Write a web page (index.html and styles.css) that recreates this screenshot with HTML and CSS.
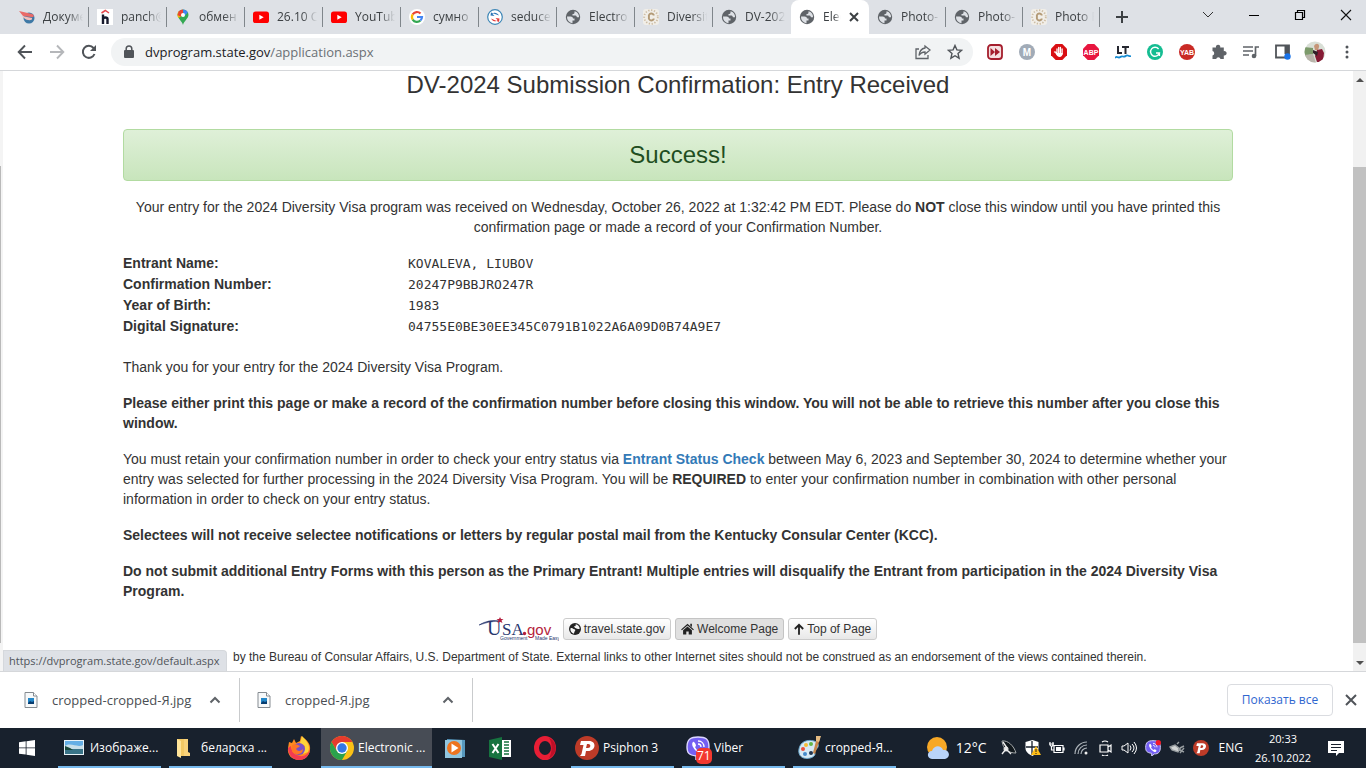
FILE: index.html
```html
<!DOCTYPE html>
<html lang="en">
<head>
<meta charset="utf-8">
<title>Electronic Diversity Visa Program</title>
<link rel="stylesheet" href="styles.css">
</head>
<body>
<svg class="defs" aria-hidden="true">
  <symbol id="globe" viewBox="0 0 16 16"><circle cx="8" cy="8" r="7.2" fill="#5f6368"/><path d="M2 7.500H5.500C7 7.500 8 8.300 8 9.500h1.500v2H7.500v2.700A6.200 6.200 0 0 1 2 7.500zM9.500 2.200V3.500C9.500 4.500 8.700 5 7.500 5v1.500h3c1 0 1 1 1.500 1.800h2.100A6.200 6.200 0 0 0 9.500 2.200z" fill="#dee1e6"/></symbol>
  <symbol id="youtube" viewBox="0 0 16 16"><rect y="2.500" width="16" height="11.500" rx="2.600" fill="#f00"/><path d="M6.300 5.700v5L10.700 8.200z" fill="#fff"/></symbol>
  <symbol id="sun-c" viewBox="0 0 16 16"><rect width="16" height="16" rx="3" fill="#f1eee8"/><circle cx="8" cy="8" r="6.800" fill="none" stroke="#cdbda4" stroke-width="1.800" stroke-dasharray="1.300 1.600"/><path d="M10.600 6.400V5.700A2.600 2.400 0 0 0 5.900 6.200v3.600a2.600 2.400 0 0 0 4.700.5v-.7" fill="none" stroke="#b39a76" stroke-width="1.900"/></symbol>
  <symbol id="picture-file" viewBox="0 0 14 18"><path d="M1 1.500h8.500L13 5v11.500H1z" fill="#f7f9fa" stroke="#858b91"/><path d="M9.500 1.500V5H13" fill="#fff" stroke="#858b91"/><path d="M4 7h6v6H4z" fill="#2487c8"/><path d="M4 12l2-2 2 1 2-1v3H4z" fill="#083d70"/></symbol>
  <symbol id="chev-up" viewBox="0 0 12 12"><path d="M1.500 8.500L6 4l4.500 4.500" fill="none" stroke="#5f6368" stroke-width="2"/></symbol>
  <symbol id="psiphon" viewBox="0 0 24 24"><circle cx="12" cy="12" r="12" fill="#bd3b28"/><path d="M6 5h8c8 0 7 10-1 10h-2l-1 5H5l1.500-2 2-9H5zM12 8l-1 4h2c3 0 3-4 .5-4z" fill="#fff" fill-rule="evenodd"/></symbol>
  <symbol id="viber" viewBox="0 0 24 24"><path d="M12 1c8 0 11 2 11 10 0 7-3 10-9 10l-4 3v-4C3 19 1 17 1 11 1 3 5 1 12 1z" fill="#735ff2" stroke="#dcd7ff" stroke-width="1.400"/><path d="M7 6c-2 2 0 6 3 9 3 3 6 4 7 2 1-1-1-3-3-3l-1 1c-2-1-3-2-4-4l1-1c0-2-2-5-3-4z" fill="#fff"/><path d="M12 5c4 0 6 3 6 6M12 8c2 0 3 1 3 3" fill="none" stroke="#fff" stroke-width="1.300"/></symbol>
</svg>

<header class="browser-head">
  <div class="tabstrip">
    <nav class="tabs" aria-label="Tabs">
      <button class="tab"><svg class="fav" viewBox="0 0 16 16"><circle cx="10" cy="9" r="5.500" fill="#3e79a6"/><path d="M0 2l13 3c3 1 2 4-1 3L4 7z" fill="#e96a68"/><path d="M3 7l10 2c1 3-5 3-8 0z" fill="#f3bebb"/></svg><span>Докумен</span></button>
      <button class="tab"><svg class="fav" viewBox="0 0 16 16"><path fill="#fff" d="M0 0h16v16H0z"/><path d="M4.500 4l3.800-2.500L12 4" fill="none" stroke="#e5484d" stroke-width="1.500"/><path d="M6 5.500V15M6 10c0-2 4.500-2 4.500 0v5" fill="none" stroke="#17192d" stroke-width="2.400"/></svg><span>panch@</span></button>
      <button class="tab"><svg class="fav" viewBox="0 0 16 16"><path d="M8 16C7 12 3 10 2.500 6A5.500 5.500 0 0 1 13.500 6C13 10 9 12 8 16z" fill="#34a853"/><path d="M3.500 9A5.500 5.500 0 0 1 3.700 2.600L8 6z" fill="#fbbc04"/><path d="M3.700 2.600A5.500 5.500 0 0 1 8 .5v4L5.500 7.800 2.600 6z" fill="#ea4335"/><path d="M8 .5a5.500 5.500 0 0 1 4.800 3L8.500 8z" fill="#4285f4"/><circle cx="8" cy="6" r="2" fill="#fff"/></svg><span>обмен</span></button>
      <button class="tab"><svg class="fav"><use href="#youtube"/></svg><span>26.10 С</span></button>
      <button class="tab"><svg class="fav"><use href="#youtube"/></svg><span>YouTub</span></button>
      <button class="tab"><svg class="fav" viewBox="0 0 16 16"><circle cx="8" cy="8" r="8" fill="#fff"/><g fill="none" stroke-width="2.200"><path d="M11.500 4.500A5 5 0 0 0 3.700 5.400" stroke="#ea4335"/><path d="M3.700 5.400a5 5 0 0 0 0 5.200" stroke="#fbbc05"/><path d="M3.700 10.600a5 5 0 0 0 7.700.9" stroke="#34a853"/><path d="M11.400 11.500A5 5 0 0 0 13 8H8" stroke="#4285f4"/></g></svg><span>сумно</span></button>
      <button class="tab"><svg class="fav" viewBox="0 0 16 16"><circle cx="8" cy="8" r="7.300" fill="#fff" stroke="#3d86b6" stroke-width="1.200"/><path d="M12 6.500C10 3 6.500 3 5.500 5l2 2-4-.5L4 3.500" fill="#2874b5"/><path d="M4 9.500c2 3.500 5.500 3.500 6.500 1.500L8.500 9l4 .5-.5 3.500" fill="#e33d3b"/></svg><span>seduce</span></button>
      <button class="tab"><svg class="fav"><use href="#globe"/></svg><span>Electro</span></button>
      <button class="tab"><svg class="fav"><use href="#sun-c"/></svg><span>Diversit</span></button>
      <button class="tab before-active"><svg class="fav"><use href="#globe"/></svg><span>DV-202</span></button>
      <div class="tab active"><svg class="fav"><use href="#globe"/></svg><span>Elec</span><button class="tab-close" aria-label="Close tab"><svg width="10" height="10" viewBox="0 0 10 10"><path d="M1 1l8 8M9 1L1 9" stroke="#3c4043" stroke-width="2"/></svg></button></div>
      <button class="tab"><svg class="fav"><use href="#globe"/></svg><span>Photo-</span></button>
      <button class="tab"><svg class="fav"><use href="#globe"/></svg><span>Photo-</span></button>
      <button class="tab"><svg class="fav"><use href="#sun-c"/></svg><span>Photo R</span></button>
    </nav>
    <button class="newtab" aria-label="New tab"><svg width="12" height="12" viewBox="0 0 12 12"><path d="M6 0v12M0 6h12" stroke="#3c4043" stroke-width="2"/></svg></button>
    <div class="win-controls">
      <button aria-label="Search tabs"><svg width="12" height="12" viewBox="0 0 12 12"><path d="M1 3l5 5 5-5" fill="none" stroke="#333"/></svg></button>
      <button aria-label="Minimize"><svg width="12" height="12" viewBox="0 0 12 12"><path d="M1 6.500h10" stroke="#000"/></svg></button>
      <button aria-label="Restore"><svg width="12" height="12" viewBox="0 0 12 12"><path d="M1.500 3.500h7v7h-7zM3.500 3V1.500h7v7H9" fill="none" stroke="#000" stroke-width="1.200"/></svg></button>
      <button aria-label="Close"><svg width="12" height="12" viewBox="0 0 12 12"><path d="M1 1l10 10M11 1L1 11" stroke="#111" stroke-width="1.100"/></svg></button>
    </div>
  </div>
  <div class="toolbar">
    <button class="tool" aria-label="Back"><svg width="16" height="16" viewBox="0 0 16 16"><path d="M15 8H2M8 1.500L1.700 8 8 14.500" fill="none" stroke="#505459" stroke-width="1.900"/></svg></button>
    <button class="tool" aria-label="Forward"><svg width="16" height="16" viewBox="0 0 16 16"><path d="M1 8h13M8 1.500L14.300 8 8 14.500" fill="none" stroke="#b5b7ba" stroke-width="1.900"/></svg></button>
    <button class="tool" aria-label="Reload"><svg width="16" height="16" viewBox="0 0 16 16"><path d="M13.500 10A6 6 0 1 1 12.500 4l1.500 1.500" fill="none" stroke="#505459" stroke-width="2"/><path d="M15 1v6H9z" fill="#505459"/></svg></button>
    <div class="omnibox">
      <svg width="10" height="14" viewBox="0 0 10 14"><path d="M2.200 6V3.800a2.800 2.800 0 0 1 5.600 0V6" fill="none" stroke="#505459" stroke-width="1.500"/><rect y="5" width="10" height="8" rx="1" fill="#505459"/></svg>
      <a class="url" href="#top">dvprogram.state.gov<span>/application.aspx</span></a>
      <button class="tool" aria-label="Share"><svg width="16" height="16" viewBox="0 0 16 16"><path d="M4 5H1v9.500h12V11" fill="none" stroke="#5f6368" stroke-width="1.300"/><path d="M10 2l5 4-5 4.200V8C7 8 5.500 9 4 11.500 4.500 7 7 4.500 10 4z" fill="none" stroke="#5f6368" stroke-width="1.300"/></svg></button>
      <button class="tool" aria-label="Bookmark"><svg width="16" height="16" viewBox="0 0 16 16"><path d="M8 1.500l1.900 4.400 4.800.4L11 9.500l1.100 4.700L8 11.700l-4.100 2.500L5 9.500 1.300 6.300l4.800-.4z" fill="none" stroke="#505459" stroke-width="1.400"/></svg></button>
    </div>
    <div class="extensions">
      <button class="tool" aria-label="Video speed"><svg width="16" height="16" viewBox="0 0 16 16"><rect x="1" y="1" width="14" height="14" rx="3" fill="#f5dfe0" stroke="#a51e2d" stroke-width="1.800"/><path d="M3.500 4l4.500 4-4.500 4zM8 4l5 4-5 4z" fill="#a51e2d"/></svg></button>
      <button class="tool" aria-label="M extension"><svg width="16" height="16"><circle cx="8" cy="8" r="8" fill="#a1abb7"/><text x="8" y="12" class="badge-text t10">M</text></svg></button>
      <button class="tool" aria-label="AdBlock"><svg width="16" height="16" viewBox="0 0 16 16"><path d="M4.700 0h6.600L16 4.700v6.600L11.300 16H4.700L0 11.300V4.700z" fill="#d90f13"/><path d="M3.500 8c1-.5 1.500.5 2 1.500M6 10V5M7.700 9V3.500M9.400 9V3.500M11.100 10V5" fill="none" stroke="#fff" stroke-width="1.300" stroke-linecap="round"/><path d="M4.500 9h7.200c0 5-5.500 5.500-7.200 0z" fill="#fff"/></svg></button>
      <button class="tool" aria-label="Adblock Plus"><svg width="16" height="16"><path d="M4.700 0h6.600L16 4.700v6.600L11.300 16H4.700L0 11.300V4.700z" fill="#e8163f"/><text x="8" y="11" class="badge-text t7">ABP</text></svg></button>
      <button class="tool" aria-label="LanguageTool"><svg width="16" height="16" viewBox="0 0 16 16"><path d="M3 2v7h4M7 3h7M10.500 3v7" fill="none" stroke="#252730" stroke-width="2"/><path d="M0 14c2-3 3 1 5.300-1s3 1 5.300-1 3 1 5.400 0" fill="none" stroke="#168bd2" stroke-width="1.800"/></svg></button>
      <button class="tool" aria-label="Grammarly"><svg width="16" height="16" viewBox="0 0 16 16"><circle cx="8" cy="8" r="8" fill="#15bd92"/><path d="M11.600 5A4.500 4.500 0 1 0 12.400 9H9M12.400 8.500V12" fill="none" stroke="#fff" stroke-width="1.400"/></svg></button>
      <button class="tool" aria-label="YAB"><svg width="16" height="16"><circle cx="8" cy="8" r="8" fill="#c92a25"/><text x="8" y="11" class="badge-text t7">YAB</text></svg></button>
      <button class="tool" aria-label="Extensions"><svg width="16" height="16" viewBox="0 0 16 16"><path d="M1.500 3.500H5a2.200 2.200 0 1 1 4.200 0h3.600v3.700a2.200 2.200 0 1 1 0 4.200V15H9.500a2.200 2.200 0 0 0-4.300 0H1.500v-3.600a2.200 2.200 0 0 0 0-4.300z" fill="#5f6368"/></svg></button>
      <button class="tool" aria-label="Media"><svg width="16" height="16" viewBox="0 0 16 16"><path d="M0 3h10M0 7h10M0 11h6M12.500 12V3H16" fill="none" stroke="#5f6368" stroke-width="1.700"/><circle cx="11" cy="12" r="2.300" fill="#5f6368"/></svg></button>
      <button class="tool" aria-label="Side panel"><svg width="16" height="16" viewBox="0 0 16 16"><path d="M1 1.500h13v12H1z" fill="#fff" stroke="#505459" stroke-width="1.800"/><path d="M9.500 2H14v8H9.500z" fill="#505459"/><circle cx="12.500" cy="12.500" r="3.200" fill="#1a73e8"/></svg></button>
      <button class="tool" aria-label="Profile"><svg width="22" height="22" viewBox="0 0 22 22"><defs><clipPath id="face"><circle cx="11" cy="11" r="10.500"/></clipPath></defs><g clip-path="url(#face)"><path fill="#d9dfd6" d="M0 0h22v22H0z"/><path d="M0 6l9 1v6l-9 2z" fill="#7c9a6b"/><path d="M0 14l9-1 3 9H0z" fill="#b9b5ab"/><path d="M10 5c2-4 6-2 5 1l-1 3h-3z" fill="#c69578"/><path d="M13 9l5-1 2 4-1 9h-6l-2-6z" fill="#861b35"/><path d="M9 9l5 2-1 4-4-3z" fill="#302028"/></g></svg></button>
      <button class="tool" aria-label="Menu"><svg width="16" height="16" viewBox="0 0 16 16" fill="#505459"><circle cx="8" cy="3" r="1.500"/><circle cx="8" cy="8" r="1.500"/><circle cx="8" cy="13" r="1.500"/></svg></button>
    </div>
  </div>
</header>

<div class="viewport" id="top">
  <div class="edge"><i></i></div>
  <main class="page">
    <h1>DV-2024 Submission Confirmation: Entry Received</h1>
    <div class="alert">Success!</div>
    <p class="center">Your entry for the 2024 Diversity Visa program was received on Wednesday, October 26, 2022 at 1:32:42 PM EDT. Please do <b>NOT</b> close this window until you have printed this confirmation page or made a record of your Confirmation Number.</p>
    <dl class="record">
      <dt>Entrant Name:</dt><dd>KOVALEVA, LIUBOV</dd>
      <dt>Confirmation Number:</dt><dd>20247P9BBJRO247R</dd>
      <dt>Year of Birth:</dt><dd>1983</dd>
      <dt>Digital Signature:</dt><dd>04755E0BE30EE345C0791B1022A6A09D0B74A9E7</dd>
    </dl>
    <p>Thank you for your entry for the 2024 Diversity Visa Program.</p>
    <p><b>Please either print this page or make a record of the confirmation number before closing this window. You will not be able to retrieve this number after you close this window.</b></p>
    <p>You must retain your confirmation number in order to check your entry status via <a href="#status">Entrant Status Check</a> between May 6, 2023 and September 30, 2024 to determine whether your entry was selected for further processing in the 2024 Diversity Visa Program. You will be <b>REQUIRED</b> to enter your confirmation number in combination with other personal information in order to check on your entry status.</p>
    <p><b>Selectees will not receive selectee notifications or letters by regular postal mail from the Kentucky Consular Center (KCC).</b></p>
    <p><b>Do not submit additional Entry Forms with this person as the Primary Entrant! Multiple entries will disqualify the Entrant from participation in the 2024 Diversity Visa Program.</b></p>
    <div class="links">
      <a class="usa" href="#usa" aria-label="USA.gov"><svg width="80" height="24" viewBox="0 0 80 24"><path d="M0 8Q10 2 20 4Q10 4 0 8z" fill="#27366e" stroke="#27366e" stroke-width=".6"/><text x="8" y="18" class="usa-u">U</text><text x="23" y="18" class="usa-sa">SA</text><circle cx="45.500" cy="16.500" r="1.700" fill="#b41e3d"/><text x="48" y="18" class="usa-gov">gov</text><path d="M21 0l1 2h2.500L22.500 3.500l1 2.500L21 4.700 18.500 6l1-2.500L17.500 2H20z" fill="#b41e3d"/><text x="21" y="23" class="usa-small">Government</text><text x="56" y="23" class="usa-small">Made Easy</text></svg></a>
      <a class="btn" href="#travel"><svg width="12" height="12" viewBox="0 0 16 16"><circle cx="8" cy="8" r="8" fill="#222"/><path d="M2 7c3-1 3 1 5 1.300 2 .3 1.500 2 .5 3-.5.700-.4 2-1.200 3C3 13 1.300 10 2 7zM9 1.500c-.5 1 .5 1.500-.5 2.500s-2 .6-2 1.800 2 .5 2.800 1.200c1.200 1 2.500 1.500 5 .8C14 4 12 2 9 1.500z" fill="#f5f5f5"/></svg>travel.state.gov</a>
      <a class="btn hover" href="#welcome"><svg width="13" height="12" viewBox="0 0 16 15"><path d="M0 8l8-7 8 7-1 1-7-6-7 6zM11.500 1h2v4l-2-1.700zM2.500 9L8 4.300 13.500 9v5.500H9.500v-4h-3v4h-4z" fill="#222"/></svg>Welcome Page</a>
      <a class="btn" href="#top"><svg width="10" height="12" viewBox="0 0 12 14"><path d="M6 14V2M1 7l5-5 5 5" fill="none" stroke="#222" stroke-width="2.200"/></svg>Top of Page</a>
    </div>
    <footer class="legal">by the Bureau of Consular Affairs, U.S. Department of State. External links to other Internet sites should not be construed as an endorsement of the views contained therein.</footer>
  </main>
  <div class="scroll"><b class="up"></b><i class="gap-top"></i><i class="thumb"></i><i class="gap-bottom"></i><b class="down"></b></div>
  <div class="status">https://dvprogram.state.gov/default.aspx</div>
</div>

<section class="downloads" aria-label="Downloads">
  <button class="file"><svg width="14" height="18"><use href="#picture-file"/></svg><span>cropped-cropped-Я.jpg</span><svg width="12" height="12"><use href="#chev-up"/></svg></button>
  <button class="file"><svg width="14" height="18"><use href="#picture-file"/></svg><span>cropped-Я.jpg</span><svg width="12" height="12"><use href="#chev-up"/></svg></button>
  <button class="show-all">Показать все</button>
  <button class="dl-close" aria-label="Close"><svg width="12" height="12" viewBox="0 0 12 12"><path d="M1 1l10 10M11 1L1 11" stroke="#505459" stroke-width="2"/></svg></button>
</section>

<footer class="taskbar">
  <button class="start" aria-label="Start"><svg width="16" height="16" viewBox="0 0 16 16"><path d="M0 2.200l6.700-.9v6.200H0zM7.500 1.200L16 0v7.500H7.500zM0 8.300h6.700v6.300L0 13.700zM7.500 8.300H16V16l-8.500-1.200z" fill="#fff"/></svg></button>
  <button class="task"><svg viewBox="0 0 24 24"><path d="M2 4h20v15H2z" fill="#e8f2f7"/><path d="M3 5h18v13H3z" fill="#65afe5"/><path d="M3 10c6-4 12 2 18-1v4H3z" fill="#c8dfe9"/><path d="M3 11l6 2 12 0v5H3z" fill="#397488"/><path d="M3 10l5 2 3 2H3z" fill="#194739"/></svg><span>Изображе...</span></button>
  <button class="task"><svg viewBox="0 0 24 24"><path d="M4 3h11v17H4z" fill="#f3c964"/><path d="M4 3l4 2v17l-4-2z" fill="#ffe499"/><path d="M11 3h4v13l2 1v3h-6z" fill="#f8d27a"/></svg><span>беларска ...</span></button>
  <button class="task small" aria-label="Firefox"><svg viewBox="0 0 24 24"><path d="M2 6l3 1 2-4 2 4 4-2 1-5c6 4 10 8 9 14-1 7-6 10-11 10C5 24 0 19 1 12z" fill="#ff8a20"/><path d="M15 0c5 5 9 10 6 16l-5 2 2-8-5-3z" fill="#ffd43b"/><path d="M1 12c0 7 5 12 11 12s10-4 11-10c-4 7-9 7-13 5C6 18 4 14 4 10z" fill="#f33a52"/><circle cx="12" cy="13" r="6" fill="#7950c9"/><path d="M5 9c4-2 6 0 8 1-1 2-3 1-4 3 2 3 5 2 7 0 0 6-8 7-11 2z" fill="#ff7625"/></svg></button>
  <button class="task current"><svg viewBox="0 0 24 24"><circle cx="12" cy="12" r="12" fill="#fbc116"/><path d="M1.600 6A12 12 0 0 1 22.400 6H12l-5.200 9z" fill="#e53b2d"/><path d="M1.600 6A12 12 0 0 0 12 24l5.200-9H6.800z" fill="#2ba24c"/><circle cx="12" cy="12" r="6" fill="#fff"/><circle cx="12" cy="12" r="4.700" fill="#3478e5"/></svg><span>Electronic ...</span></button>
  <button class="task small" aria-label="Media player"><svg viewBox="0 0 24 24"><path d="M4 3l18 1v17H4z" fill="#5798bd"/><path d="M2 4h17v18H2z" fill="#90c5de"/><circle cx="11" cy="12" r="7" fill="#ed741f"/><path d="M8.500 7.500v9l7-4.500z" fill="#fff"/></svg></button>
  <button class="task small" aria-label="Excel"><svg viewBox="0 0 24 24"><path d="M12 4h11v17H12z" fill="#fff"/><path d="M1 4l13-3v23L1 21z" fill="#16733f"/><path d="M4.500 8l6 9M10.500 8l-6 9" stroke="#fff" stroke-width="2"/><path d="M16 6h5M16 9h5M16 12h5M16 15h5M16 18h5" stroke="#16733f" stroke-width="1.600"/></svg></button>
  <button class="task small" aria-label="Opera"><svg viewBox="0 0 24 24"><ellipse cx="12" cy="12" rx="8.500" ry="9.500" fill="none" stroke="#e81e35" stroke-width="5"/><path d="M16 2c9 4 9 16 0 20 3-4 4-15 0-20z" fill="#bd1028"/></svg></button>
  <button class="task"><svg><use href="#psiphon"/></svg><span>Psiphon 3</span></button>
  <button class="task viber"><svg><use href="#viber"/></svg><em>71</em><span>Viber</span></button>
  <button class="task"><svg viewBox="0 0 24 24"><path d="M2 13C3 6 10 3 17 5c7 2 4 8 1 9-3 1 2 3-1 6-4 4-17 4-15-7z" fill="#d5e9f5" stroke="#6ca8cc"/><circle cx="6" cy="13" r="2" fill="#ec4f3b"/><circle cx="9" cy="9" r="2" fill="#f6bb35"/><circle cx="14" cy="8" r="2" fill="#63b646"/><circle cx="8" cy="18" r="2" fill="#448bcb"/><circle cx="14" cy="17" r="2" fill="#22344d"/><path d="M20 1l3 2-5 15-2-1z" fill="#c8874b"/><path d="M19 0h5l-2 6-3-1z" fill="#e5bc83"/></svg><span>cropped-Я...</span></button>
  <div class="tray">
    <button class="weather"><svg width="24" height="24" viewBox="0 0 24 24"><circle cx="11" cy="11" r="10" fill="#f7a826"/><path d="M6 23c-6-1-5-8 0-8 2-6 9-6 11-1 7-1 8 8 2 9z" fill="#b9d4fa"/></svg>12°C</button>
    <button aria-label="Satellite"><svg viewBox="0 0 16 16"><path d="M1 1c6-1 12 5 14 12-7 0-13-3-14-12z" fill="#11181d" stroke="#a5a9aa"/><circle cx="5" cy="9" r="2.500" fill="#ddd"/><path d="M1 14l4-5 5 5M2 2l4 6" stroke="#eee" stroke-width="1.400" fill="none"/></svg></button>
    <button aria-label="Security"><svg viewBox="0 0 16 16"><path d="M7.500 0l6 2v6c0 4-3 6-6 8-4-2-7-4-7-8V2z" fill="#fff"/><path d="M7 1v14M1 7h12" stroke="#17202c" stroke-width="1.300"/><path d="M11 6l5 9H6z" fill="#ffbd17"/><path d="M11 9v3M11 13v1" stroke="#222"/></svg></button>
    <button aria-label="Battery"><svg viewBox="0 0 16 16"><path d="M5 5.500h9v7H5zM15 7.500v3M0 4h5M1 2v2M4 2v2M1 4c0 3 3 3 3 0M2.500 6v4H5" fill="none" stroke="#fff" stroke-width="1.200"/><path d="M7 7h5v4H7z" fill="#fff"/></svg></button>
    <button aria-label="Network"><svg viewBox="0 0 16 16"><circle cx="13" cy="13" r="1.500" fill="#eee"/><path d="M8 14a6 6 0 0 1 6-6M5 14a9 9 0 0 1 9-9M2 14A12 12 0 0 1 14 2" fill="none" stroke="#acb3b9" stroke-width="1.200"/></svg></button>
    <button aria-label="Camera"><svg viewBox="0 0 16 16"><path d="M3 5h8v7H3zM11 7l3-2v7l-3-2M5 2q3-2 6 0M5 15q3 2 6 0" fill="none" stroke="#fff" stroke-width="1.200"/></svg></button>
    <button aria-label="Sound"><svg viewBox="0 0 16 16"><path d="M1 6h2l4-3v10l-4-3H1zM9 5.500q2 2.500 0 5M11 4q4 4 0 8M13 2q5 6 0 12" fill="none" stroke="#fff"/></svg></button>
    <button aria-label="Viber"><svg viewBox="0 0 24 24"><use href="#viber"/><circle cx="20" cy="4" r="4" fill="#f41827"/></svg></button>
    <button aria-label="Device"><svg viewBox="0 0 16 16"><path d="M1 7l5-2 5 4-2 3-6-2zM8 4l2-2M9 9l6 3M11 8l4-2M11 13l4-5" stroke="#979da0" fill="#d2d4d4" stroke-width="1.400"/></svg></button>
    <button aria-label="Psiphon"><svg><use href="#psiphon"/></svg></button>
  </div>
  <button class="lang">ENG</button>
  <time class="clock">20:33<br>26.10.2022</time>
  <button class="notice" aria-label="Notifications"><svg width="16" height="16" viewBox="0 0 16 16"><path d="M0 1h16v12h-5l-3 3v-3H0z" fill="#fff"/><path d="M3 4.500h10M3 7.500h10M3 10.500h6" stroke="#17202c"/></svg></button>
</footer>
</body>
</html>
```
FILE: styles.css
```css
* { box-sizing: border-box; }
body {
  margin: 0;
  height: 100vh;
  display: flex;
  flex-direction: column;
  overflow: hidden;
  background: #fff;
  color: #333;
  font-family: "Liberation Sans", Arial, sans-serif;
  font-size: 14px;
  line-height: 20px;
}
button {
  margin: 0;
  padding: 0;
  border: 0;
  background: none;
  color: inherit;
  font: inherit;
}
svg { display: block; flex: none; }
.defs { position: absolute; width: 0; height: 0; }
.browser-head, .downloads, .taskbar, .status { font-family: "Open Sans", "Noto Sans", sans-serif; }

/* Tabs */
.tabstrip {
  display: flex;
  height: 34px;
  padding-left: 11px;
  background: #dee1e6;
  font-size: 12px;
  color: #3c4043;
}
.tabs { display: flex; min-width: 0; }
.tab {
  display: flex;
  align-items: center;
  width: 78px;
  padding: 0 5px 0 8px;
  gap: 8px;
  background: linear-gradient(#80868b, #80868b) right center / 1px 20px no-repeat;
}
.fav { width: 16px; height: 16px; }
.tab span {
  flex: 1;
  min-width: 0;
  overflow: hidden;
  text-align: left;
  white-space: nowrap;
  mask-image: linear-gradient(to right, #000 60%, transparent 98%);
}
.before-active { background: none; }
.tab.active { padding-right: 8px; background: #fff; border-radius: 8px 8px 0 0; }
.tab.active ~ .tab { width: 77px; }
.tab-close { width: 12px; }
.newtab { display: grid; place-items: center; width: 44px; }
.win-controls { display: flex; gap: 6px; margin-left: auto; height: 30px; }
.win-controls button { display: grid; place-items: center; width: 40px; }

/* Toolbar */
.toolbar {
  display: flex;
  align-items: center;
  gap: 4px;
  height: 37px;
  padding: 0 5px 0 11px;
  border-bottom: 1px solid #d5d7da;
}
.tool { display: grid; place-items: center; flex: none; width: 28px; height: 28px; }
.omnibox {
  display: flex;
  align-items: center;
  flex: 1;
  height: 28px;
  gap: 4px;
  margin: 0 4px;
  padding: 0 4px 0 13px;
  border-radius: 14px;
  background: #f1f3f4;
}
.url { flex: 1; padding-left: 7px; color: #202124; font-size: 13px; text-decoration: none; }
.url span { color: #6b7075; }
.extensions { display: flex; gap: 4px; }
.badge-text { fill: #fff; font-family: "Liberation Sans", sans-serif; font-weight: bold; text-anchor: middle; }
.t10 { font-size: 10px; }
.t7 { font-size: 7px; }

/* Web page */
.viewport { position: relative; display: flex; flex: 1; min-height: 0; }
.edge { display: flex; flex-direction: column; width: 3px; padding: 95px 0 28px; background: #f4f4f4; }
.edge i { flex: 1; width: 1px; background: #b9b9b9; }
.page { flex: 1; min-width: 0; padding: 0 120px; }
h1 { margin: 0 0 30px; font-size: 24px; font-weight: normal; line-height: 28px; text-align: center; }
.alert {
  padding: 11px;
  border: 1px solid #b2dba1;
  border-radius: 4px;
  background: linear-gradient(#dff0d8, #c8e5bc);
  color: #1f4e21;
  font-size: 24px;
  line-height: 28px;
  text-align: center;
}
p { margin: 16px 0; }
p a { color: #337ab7; font-weight: bold; text-decoration: none; }
.center { text-align: center; }
.record { display: grid; grid-template-columns: 285px 1fr; margin: 16px 0 20px; line-height: 21px; }
.record dt { font-weight: bold; }
.record dd { margin: 0; font-family: "DejaVu Sans Mono", monospace; font-size: 13px; }
.links { display: flex; justify-content: center; align-items: center; gap: 4px; margin-top: 16px; }
.btn {
  display: flex;
  align-items: center;
  gap: 3px;
  padding: 0 5px;
  border: 1px solid #ccc;
  border-radius: 3px;
  background: linear-gradient(#fff, #e8e8e8);
  color: #333;
  font-size: 12px;
  text-decoration: none;
}
.btn.hover { background: #e0e0e0; border-color: #c4c4c4; }
.usa-u, .usa-sa { fill: #27366e; font-family: "Liberation Serif", serif; }
.usa-u { font-size: 20px; }
.usa-sa { font-size: 17px; }
.usa-gov { fill: #b41e3d; font-family: "Liberation Sans", sans-serif; font-size: 15px; }
.usa-small { fill: #27366e; font-family: "Liberation Sans", sans-serif; font-size: 5px; }
.legal { margin-top: 6px; padding-left: 110px; font-size: 12px; white-space: nowrap; }
.scroll { display: flex; flex-direction: column; width: 13px; background: #f1f1f1; }
.scroll b { height: 17px; display: grid; place-items: center; }
.scroll b::before { content: ""; border: 4px solid transparent; }
.scroll .up::before { border-top: 0; border-bottom-color: #505050; }
.scroll .down::before { border-bottom: 0; border-top-color: #505050; }
.gap-top { flex: 79; }
.thumb { flex: 476; background: #c1c1c1; }
.gap-bottom { flex: 11; }
.status {
  position: absolute;
  left: 3px;
  bottom: 0;
  padding: 0 6px 0 5px;
  border: 1px solid #d5d8dc;
  border-bottom: 0;
  border-radius: 0 4px 0 0;
  background: #dee1e6;
  color: #50545a;
  font-size: 11px;
}

/* Downloads */
.downloads { display: flex; align-items: center; height: 57px; padding-right: 9px; border-top: 1px solid #d5d7da; font-size: 13px; color: #4a4e53; }
.file { display: flex; align-items: center; width: 240px; height: 44px; padding: 0 18px 0 24px; border-right: 1px solid #c9cbcd; }
.file + .file { width: 233px; padding-left: 17px; }
.file span { flex: 1; padding-left: 14px; text-align: left; }
.show-all { width: 106px; height: 32px; margin-left: auto; border: 1px solid #dadce0; border-radius: 4px; color: #2f66cf; font-size: 12px; font-weight: 500; }
.dl-close { margin-left: 12px; }

/* Taskbar */
.taskbar { display: flex; height: 40px; background: #18212d; color: #fff; font-size: 12px; }
.start { width: 54px; padding-left: 19px; flex: none; }
.task {
  position: relative;
  display: flex;
  align-items: center;
  flex: none;
  width: 103px;
  gap: 4px;
  margin: 0 4px;
  padding-left: 4px;
  box-shadow: inset 0 -2px #76b9ed;
  white-space: nowrap;
}
.task svg { width: 24px; height: 24px; }
.task.small { width: 45px; margin: 0; padding-left: 11px; box-shadow: none; }
.task.current { width: 111px; margin: 0; padding-left: 9px; background: #474c55; }
.viber em {
  position: absolute;
  left: 14px;
  bottom: 4px;
  padding: 0 1px;
  border-radius: 5px;
  background: #f3382f;
  font-style: normal;
  line-height: 16px;
}
.tray { display: flex; align-items: center; gap: 8px; margin-left: auto; }
.tray svg { width: 16px; height: 16px; }
.tray .weather { display: flex; align-items: center; gap: 6px; margin-right: 6px; font-size: 14px; }
.tray .weather svg { width: 24px; height: 24px; }
.lang { margin-left: 10px; }
.clock { width: 80px; padding-top: 1px; font-size: 11px; line-height: 19px; text-align: center; }
.notice { width: 43px; padding-left: 5px; flex: none; }
```
